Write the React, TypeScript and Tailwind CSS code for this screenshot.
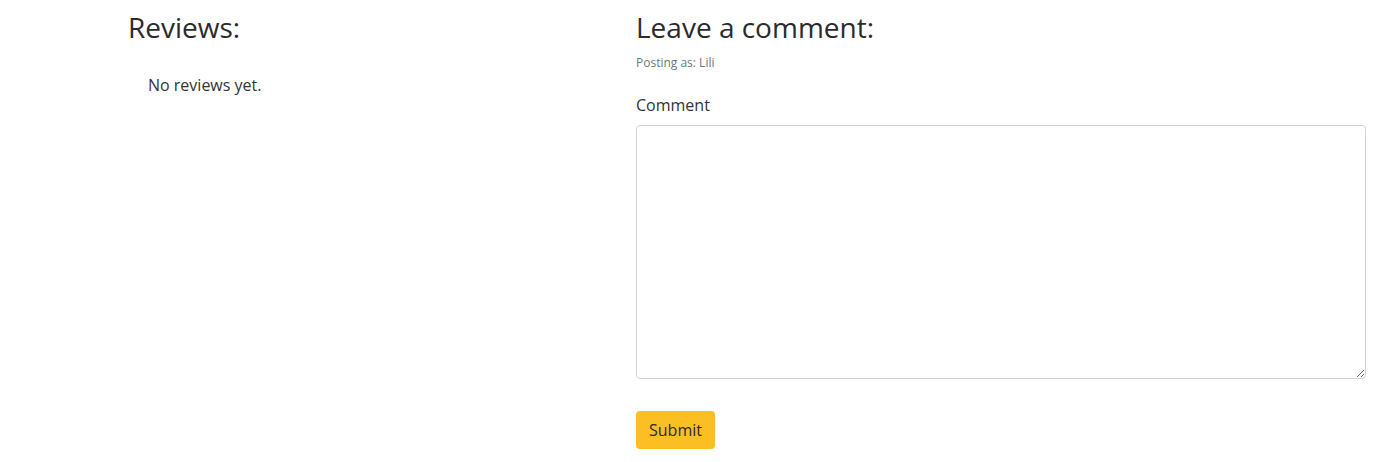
export default function App() {
  return (
    <div
      className="min-h-[462px] bg-white text-[#2b2b2b]"
      style={{ fontFamily: '"Open Sans", "Liberation Sans", sans-serif' }}
    >
      <div className="grid grid-cols-[508px_730px] pl-[128px] pt-[11px]">
        {/* Reviews */}
        <section>
          <h3 className="text-[28px] leading-[1.2] font-normal">Reviews:</h3>
          <p className="mt-[28px] pl-5 text-base leading-6 text-[#333]">No reviews yet.</p>
        </section>

        {/* Comment form */}
        <section>
          <h3 className="text-[28px] leading-[1.2] font-normal">Leave a comment:</h3>
          <p className="mt-[9px] text-[12px] leading-[18px] text-[#6c757d]">Posting as: Lili</p>
          <form className="mt-[21px]" onSubmit={(e) => e.preventDefault()}>
            <label htmlFor="comment" className="block text-base leading-6 text-[#333]">
              Comment
            </label>
            <textarea
              id="comment"
              className="mt-2 block h-[254px] w-full rounded border border-[#ced4da] bg-white px-3 py-1.5 text-base outline-none"
            />
            <button
              type="submit"
              className="mt-[32px] rounded bg-[#fbbf24] px-[13px] py-[7px] text-base leading-6 text-[#2b2b2b]"
            >
              Submit
            </button>
          </form>
        </section>
      </div>
    </div>
  );
}
